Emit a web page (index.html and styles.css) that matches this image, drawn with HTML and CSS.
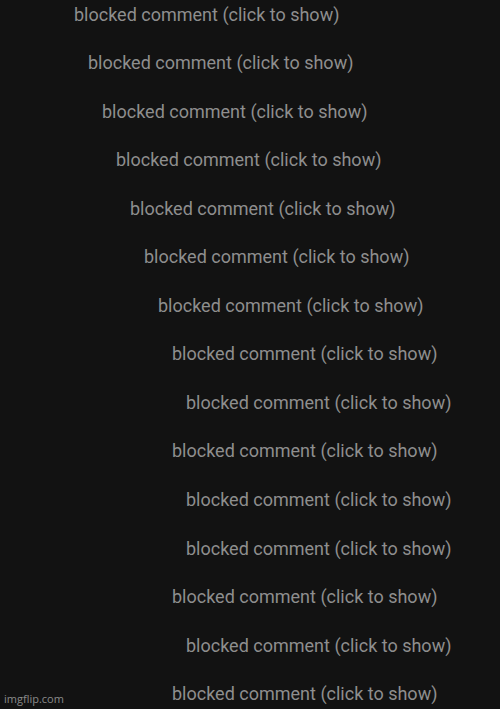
FILE: index.html
```html
<!DOCTYPE html>
<html>
<head>
<meta charset="utf-8">
<link rel="stylesheet" href="styles.css">
</head>
<body>
<div class="thread">
  <div class="c l0">blocked comment (click to show)</div>
  <div class="c l1">blocked comment (click to show)</div>
  <div class="c l2">blocked comment (click to show)</div>
  <div class="c l3">blocked comment (click to show)</div>
  <div class="c l4">blocked comment (click to show)</div>
  <div class="c l5">blocked comment (click to show)</div>
  <div class="c l6">blocked comment (click to show)</div>
  <div class="c l7">blocked comment (click to show)</div>
  <div class="c l8">blocked comment (click to show)</div>
  <div class="c l7">blocked comment (click to show)</div>
  <div class="c l8">blocked comment (click to show)</div>
  <div class="c l8">blocked comment (click to show)</div>
  <div class="c l7">blocked comment (click to show)</div>
  <div class="c l8">blocked comment (click to show)</div>
  <div class="c l7">blocked comment (click to show)</div>
</div>
<div class="wm">imgflip.com</div>
</body>
</html>
```
FILE: styles.css
```css
html, body {
  margin: 0;
  padding: 0;
  background: #121212;
  height: 709px;
  overflow: hidden;
}
body {
  position: relative;
  font-family: Roboto, "Noto Sans", sans-serif;
}
.thread {
  display: flex;
  flex-direction: column;
  margin-top: -9.5px;
}
.c {
  font-size: 18px;
  line-height: 48.55px;
  height: 48.55px;
  color: #8e8e8e;
  white-space: nowrap;
}
.l0 { padding-left: 74px; }
.l1 { padding-left: 88px; }
.l2 { padding-left: 102px; }
.l3 { padding-left: 116px; }
.l4 { padding-left: 130px; }
.l5 { padding-left: 144px; }
.l6 { padding-left: 158px; }
.l7 { padding-left: 172px; }
.l8 { padding-left: 186px; }
.wm {
  position: absolute;
  left: 4px;
  bottom: 3px;
  font-family: "Open Sans", "Noto Sans", sans-serif;
  font-size: 11px;
  color: #8a8a8a;
}
```
